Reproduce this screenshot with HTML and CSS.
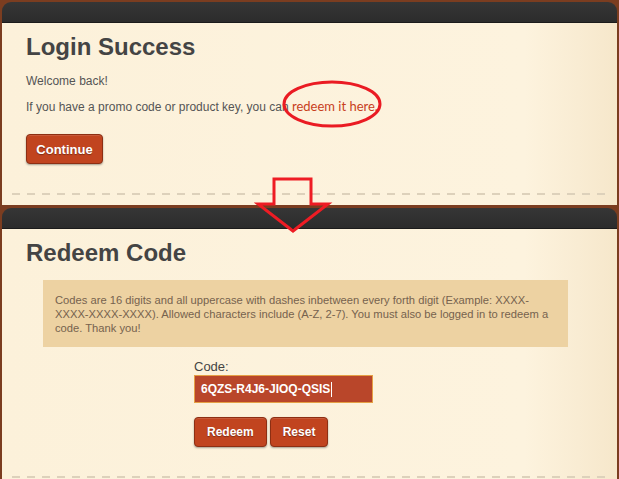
FILE: index.html
```html
<!DOCTYPE html>
<html lang="en">
<head>
  <meta charset="UTF-8">
  <title>Redeem Code</title>
  <link rel="stylesheet" href="styles.css">
</head>
<body>
  <div class="page">
    <section class="panel">
      <div class="panel-bar"></div>
      <div class="panel-body">
        <h1 class="title">Login Success</h1>
        <p class="welcome">Welcome back!</p>
        <p class="promo">If you have a promo code or product key, you can <a class="redeem-link" href="#redeem">redeem it here.</a></p>
        <button class="btn btn-continue">Continue</button>
        <div class="dashes"></div>
      </div>
    </section>

    <section class="panel" id="redeem">
      <div class="panel-bar"></div>
      <div class="panel-body">
        <h1 class="title">Redeem Code</h1>
        <div class="notice">
          Codes are 16 digits and all uppercase with dashes inbetween every forth digit (Example: XXXX-XXXX-XXXX-XXXX). Allowed characters include (A-Z, 2-7). You must also be logged in to redeem a code. Thank you!
        </div>
        <form class="redeem-form">
          <label class="field-label">Code:</label>
          <div class="code-field">6QZS-R4J6-JIOQ-QSIS<span class="caret"></span></div>
          <div class="actions">
            <button class="btn btn-small" type="button">Redeem</button>
            <button class="btn btn-small" type="reset">Reset</button>
          </div>
        </form>
        <div class="dashes"></div>
      </div>
    </section>

    <!-- red marks drawn over the page -->
    <svg class="mark-circle" width="104" height="52" viewBox="0 0 104 52">
      <ellipse cx="52" cy="25" rx="48" ry="22" fill="none" stroke="#ea1b23" stroke-width="3"/>
    </svg>
    <svg class="mark-arrow" width="80" height="60" viewBox="0 0 80 60">
      <polygon points="20,3 57,3 57,28 74,28 39,55 4,28 20,28" fill="none" stroke="#ee1c24" stroke-width="3" stroke-linejoin="miter"/>
    </svg>
  </div>
</body>
</html>
```

FILE: styles.css
```css
*{margin: 0;padding: 0;box-sizing: border-box;}
body {
  background: #7b3d20;
  font-family: "Liberation Sans", Arial, sans-serif;
  color: #555;
}
.page {
  position: relative;
  padding: 2px 2px 0 2px;
  display: flex;
  flex-direction: column;
  gap: 3px;
  height: 479px;
  overflow: hidden;
}
.panel {
  display: flex;
  flex-direction: column;
}
.panel-bar {
  height: 21px;
  background: linear-gradient(#363636, #2c2c2c);
  border-radius: 9px 9px 0 0;
  border-bottom: 1px solid #1b1b1b;
}
.panel-body {
  padding: 10px 24px 10px 24px;
  background: linear-gradient(to right, #fcf1da 0%, #fdf3de 85%, #f6e7cb 100%);
}
.title {
  font-size: 24px;
  line-height: 28px;
  font-weight: bold;
  color: #444;
}
.welcome {
  margin-top: 13px;
  font-size: 12px;
  line-height: 15px;
}
.promo {
  margin-top: 10px;
  font-size: 12px;
  line-height: 15px;
}
.redeem-link {
  font-family: Lato, sans-serif;
  font-size: 13px;
  color: #c8401c;
  text-decoration: none;
}
.btn {
  display: inline-block;
  background: #c1441f;
  border: 1px solid #8d2f13;
  border-radius: 4px;
  color: #fff;
  box-shadow: 0 1px 2px rgba(0,0,0,0.35), inset 0 1px 0 rgba(255,255,255,0.12);
  text-shadow: 0 1px 1px rgba(0,0,0,0.35);
  cursor: pointer;
}
.btn-continue {
  margin-top: 19px;
  width: 77px;
  height: 30px;
  font-family: "Liberation Sans", Arial, sans-serif;
  font-size: 13px;
  font-weight: bold;
}
.dashes {
  height: 2px;
  margin: 29px -14px 0 -14px;
  background: repeating-linear-gradient(to right, #ddd1bb 0 8px, transparent 8px 15px);
}
.notice {
  margin: 13px 0 0 17px;
  width: 525px;
  padding: 13px 10px 12px 12px;
  background: #edd2a2;
  color: #76624e;
  font-size: 11.2px;
  line-height: 14px;
}
.redeem-form {
  margin: 12px 0 0 168px;
  display: flex;
  flex-direction: column;
  align-items: flex-start;
}
.field-label {
  font-size: 13px;
  line-height: 16px;
  color: #444;
}
.code-field {
  width: 179px;
  height: 28px;
  padding: 0 6px;
  background: #b9462a;
  border: 1px solid #e5a044;
  color: #fff;
  font-size: 12px;
  font-weight: bold;
  line-height: 26px;
  display: flex;
  align-items: center;
}
.caret {
  width: 1px;
  height: 15px;
  margin-left: 1px;
  background: #fff;
}
.actions {
  margin-top: 14px;
  display: flex;
  gap: 3px;
}
.btn-small {
  height: 30px;
  padding: 0 12px;
  font-family: "Liberation Sans", Arial, sans-serif;
  font-size: 12px;
  font-weight: bold;
}
.mark-circle {
  position: absolute;
  left: 280px;
  top: 79px;
}
.mark-arrow {
  position: absolute;
  left: 254px;
  top: 176px;
}
```
